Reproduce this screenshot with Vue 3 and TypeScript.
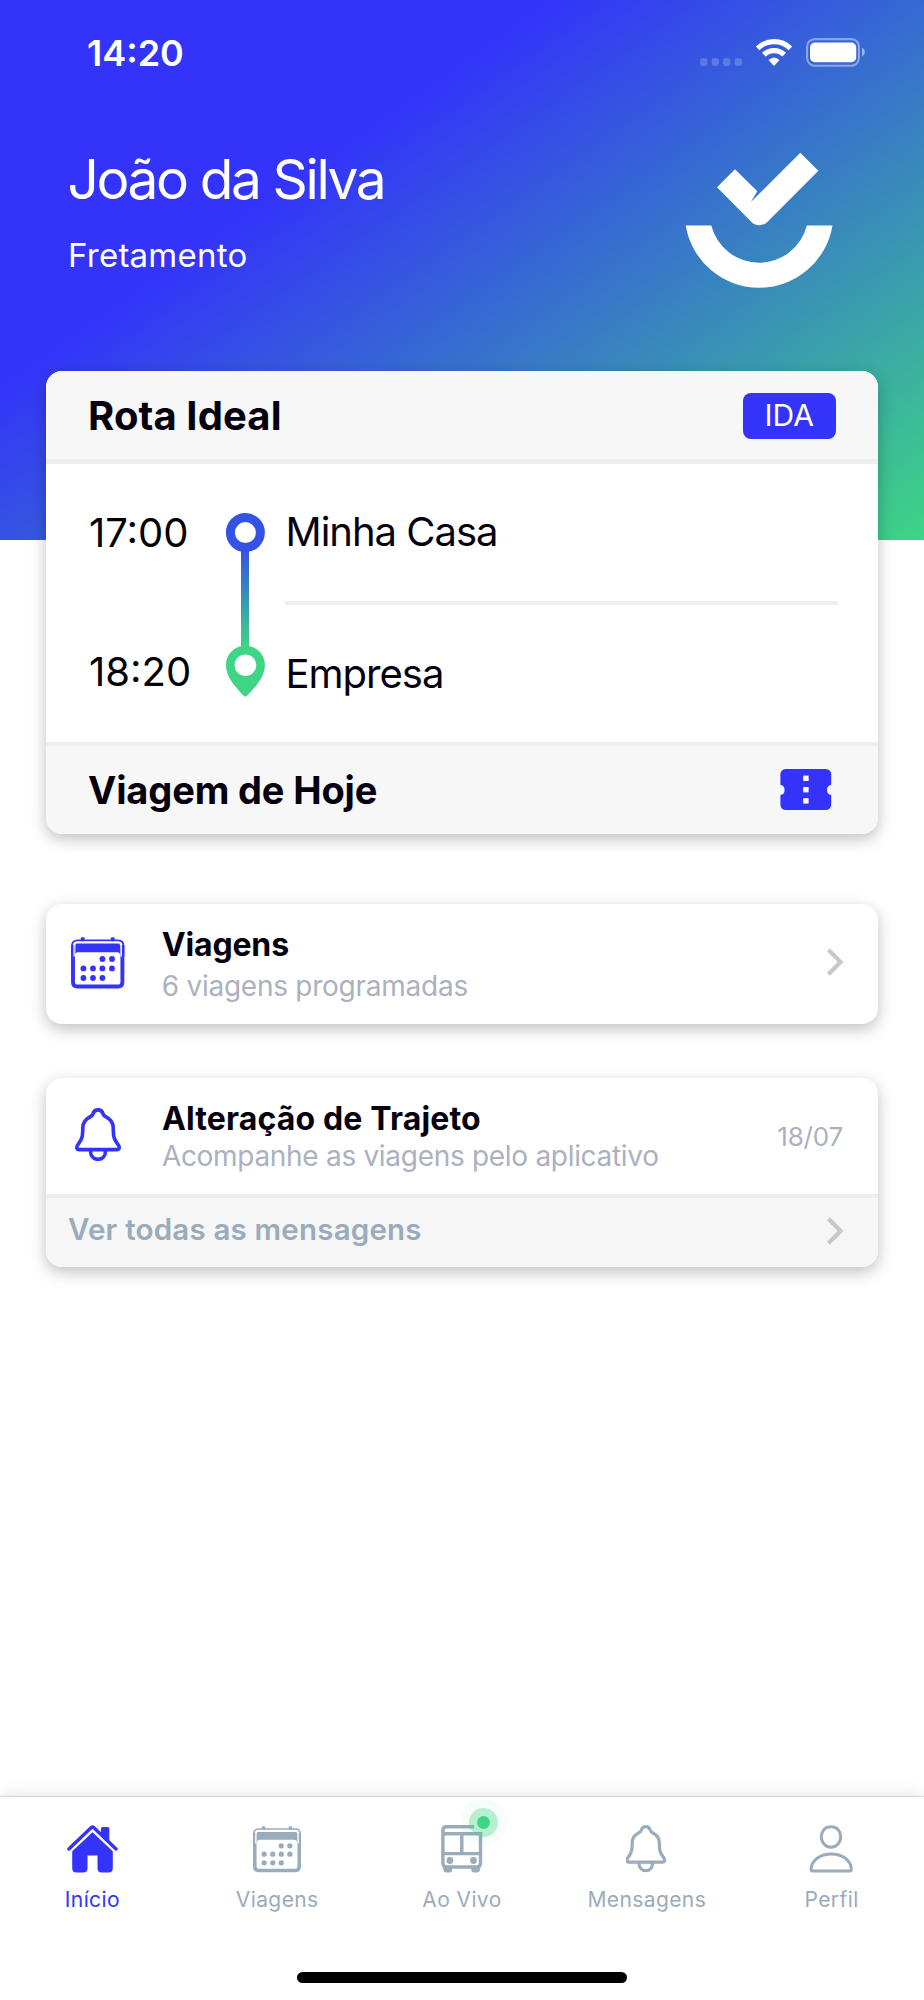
<script setup lang="ts">
interface Stop {
  time: string
  place: string
}

interface Tab {
  id: 'home' | 'calendar' | 'bus' | 'bell' | 'person'
  label: string
  active?: boolean
}

const stops: Stop[] = [
  { time: '17:00', place: 'Minha Casa' },
  { time: '18:20', place: 'Empresa' },
]

const tabs: Tab[] = [
  { id: 'home', label: 'Início', active: true },
  { id: 'calendar', label: 'Viagens' },
  { id: 'bus', label: 'Ao Vivo' },
  { id: 'bell', label: 'Mensagens' },
  { id: 'person', label: 'Perfil' },
]

const calendarDots: [number, number][] = [
  [31.4, 22], [41, 22],
  [12.4, 31.4], [22, 31.4], [31.4, 31.4], [41, 31.4],
  [12.4, 41], [22, 41], [31.4, 41],
]

const bellBody =
  'M23 1.9 C20.2 1.9 18.6 3.4 18 5.8 C17.6 7.4 16.6 8.1 15 8.9 C10.4 11.1 8 14.8 7.8 19.6 C7.7 22.4 7.8 25.4 7.2 28.4 C6.5 31.8 4.6 34.4 2.7 37 C1.1 39.3 1.7 41.6 4.2 41.6 H41.8 C44.3 41.6 44.9 39.3 43.3 37 C41.4 34.4 39.5 31.8 38.8 28.4 C38.2 25.4 38.3 22.4 38.2 19.6 C38 14.8 35.6 11.1 31 8.9 C29.4 8.1 28.4 7.4 28 5.8 C27.4 3.4 25.8 1.9 23 1.9 Z'
const bellClapper = 'M15.4 42.6 C15.4 48 18.8 51.3 23 51.3 C27.2 51.3 30.6 48 30.6 42.6'
</script>

<template>
  <div class="screen">
    <header class="hero">
      <div class="status">
        <span class="clock">14:20</span>
        <svg class="status-icons" viewBox="698 36 168 34">
          <g fill="#fff" fill-opacity="0.2">
            <rect x="700" y="58.3" width="7.4" height="7.6" rx="2.4" />
            <rect x="711.6" y="58.3" width="7.4" height="7.6" rx="2.4" />
            <rect x="723" y="58.3" width="7.4" height="7.6" rx="2.4" />
            <rect x="734.6" y="58.3" width="7.4" height="7.6" rx="2.4" />
          </g>
          <g fill="none" stroke="#fff" stroke-width="5.2">
            <path d="M757.6 48.4 A23.4 23.4 0 0 1 790.4 48.4" />
            <path d="M763.8 54.7 A14.6 14.6 0 0 1 784.2 54.7" />
          </g>
          <path d="M768.5 60 Q774 54.8 779.5 60 L775 65 Q774 66.2 773 65 Z" fill="#fff" />
          <rect x="807.1" y="39.1" width="51.8" height="26.6" rx="7.6" fill="none" stroke="#fff" stroke-opacity="0.42" stroke-width="2.1" />
          <rect x="810" y="42.5" width="46.2" height="19.7" rx="4.8" fill="#fff" />
          <path d="M862 47.8 C865.8 49.2 865.8 54.8 862 56.4 Z" fill="#fff" fill-opacity="0.5" />
        </svg>
      </div>
      <div class="intro">
        <div>
          <h1 class="name">João da Silva</h1>
          <p class="role">Fretamento</p>
        </div>
        <svg class="logo" viewBox="685 152 148 136" fill="#fff">
          <path d="M717 187.3 L735 169.3 L757.3 191.3 L750.7 202.3 L800.3 152.7 L818.4 170.7 L767.8 221.4 C763 226.4 755.2 226.4 751 221.4 Z" />
          <path d="M685.7 225.5 H711.3 A49.3 49.3 0 0 0 806.9 225.5 H832.5 A74.4 74.4 0 0 1 685.7 225.5 Z" />
        </svg>
      </div>
    </header>

    <main class="cards">
      <section class="card route">
        <div class="bar bar-top">
          <h2 class="title">Rota Ideal</h2>
          <span class="badge">IDA</span>
        </div>
        <div class="stops">
          <div class="times">
            <span v-for="s in stops" :key="s.time">{{ s.time }}</span>
          </div>
          <svg class="track" viewBox="225 512 41 186">
            <defs>
              <linearGradient id="track-line" x1="0" y1="552" x2="0" y2="646" gradientUnits="userSpaceOnUse">
                <stop offset="0" stop-color="#3453e4" />
                <stop offset="1" stop-color="#3ed585" />
              </linearGradient>
            </defs>
            <rect x="241" y="550" width="8" height="98" fill="url(#track-line)" />
            <circle cx="245.4" cy="532.6" r="15" fill="#fff" stroke="#3453e4" stroke-width="9" />
            <path d="M245.4 645.7 C256.2 645.7 264.9 654.4 264.9 665 C264.9 676 257 685.6 246.8 696 Q245.4 697.2 244 696 C233.8 685.6 225.9 676 225.9 665 C225.9 654.4 234.6 645.7 245.4 645.7 Z" fill="#3ed585" />
            <circle cx="245.4" cy="665.2" r="10.8" fill="#fff" />
          </svg>
          <div class="places">
            <span class="place">{{ stops[0].place }}</span>
            <span class="place">{{ stops[1].place }}</span>
          </div>
        </div>
        <div class="bar bar-bottom">
          <h2 class="title today">Viagem de Hoje</h2>
          <svg class="ticket" viewBox="780 769 52 41">
            <path
              d="M785.5 769 H826 A5.2 5.2 0 0 1 831.2 774.2 V784.8 A5.2 5.2 0 0 0 831.2 795 V804.8 A5.2 5.2 0 0 1 826 810 H785.5 A5.2 5.2 0 0 1 780.4 804.8 V795 A5.2 5.2 0 0 0 780.4 784.8 V774.2 A5.2 5.2 0 0 1 785.5 769 Z"
              fill="#3333fa" />
            <g fill="#fff">
              <rect x="803.2" y="775.6" width="5.4" height="5.4" />
              <rect x="803.2" y="787" width="5.4" height="5.4" />
              <rect x="803.2" y="798.2" width="5.4" height="5.4" />
            </g>
          </svg>
        </div>
      </section>

      <section class="card trips">
        <svg class="lead calendar" viewBox="0 0 53.4 51.6">
          <use href="#calendar-shape" />
        </svg>
        <div class="copy">
          <h3 class="heading trips-heading">Viagens</h3>
          <p class="sub trips-sub">6 viagens programadas</p>
        </div>
        <svg class="chevron" viewBox="0 0 18 28"><path d="M2.4 1.8 L14.6 14 L2.4 26.2" /></svg>
      </section>

      <section class="card messages">
        <div class="message">
          <svg class="lead bell" viewBox="0 0 46 53.4">
            <path :d="bellBody" />
            <path :d="bellClapper" />
          </svg>
          <div class="copy">
            <h3 class="heading message-heading">Alteração de Trajeto</h3>
            <p class="sub message-sub">Acompanhe as viagens pelo aplicativo</p>
          </div>
          <span class="date">18/07</span>
        </div>
        <div class="all">
          <span class="all-label">Ver todas as mensagens</span>
          <svg class="chevron" viewBox="0 0 18 28"><path d="M2.4 1.8 L14.6 14 L2.4 26.2" /></svg>
        </div>
      </section>
    </main>

    <nav class="tabs">
      <div class="tab-row">
        <div v-for="t in tabs" :key="t.id" class="tab" :class="{ active: t.active }">
          <div class="tab-icon">
            <svg v-if="t.id === 'home'" width="51" height="48" viewBox="66.5 1824.7 51 48">
              <path d="M100.4 1828.4 Q100.4 1826.6 102.2 1826.6 H107 Q108.8 1826.6 108.8 1828.4 V1842.5 L100.4 1834.5 Z" fill="currentColor" />
              <path d="M68.4 1848.6 L90.8 1827.2 Q92 1826.2 93.2 1827.2 L115.5 1848.6" fill="none" stroke="currentColor" stroke-width="3.4" stroke-linecap="round" />
              <path d="M92 1832 L112.3 1851 V1868 Q112.3 1872.2 108.2 1872.2 H101.2 Q97 1872.2 97 1868 V1855.2 H87 V1868 Q87 1872.2 82.8 1872.2 H75.8 Q71.7 1872.2 71.7 1868 V1851 Z" fill="currentColor" />
            </svg>
            <svg v-else-if="t.id === 'calendar'" width="48" height="46.4" viewBox="0 0 53.4 51.6">
              <g id="calendar-shape">
                <path d="M2 8 V45 Q2 49.5 6.4 49.5 H47 Q51.4 49.5 51.4 45 V8" fill="none" stroke="currentColor" stroke-width="3.9" />
                <path d="M0.9 19.5 V9 Q0.9 3.4 6.6 3.4 H46.8 Q52.5 3.4 52.5 9 V19.5" fill="none" stroke="currentColor" stroke-width="1.8" />
                <path d="M3.1 19.5 V9.4 Q3.1 5.4 6.6 5.4 H46.8 Q50.3 5.4 50.3 9.4 V19.5" fill="none" stroke="#fff" stroke-width="1.3" />
                <path d="M4.4 18 V8 Q4.4 6.6 6 6.6 H47.4 Q49 6.6 49 8 V18 Q49 15.2 46.4 15.2 H7 Q4.4 15.2 4.4 18 Z" fill="currentColor" />
                <rect x="9.8" y="0.2" width="3.8" height="4" rx="1" fill="currentColor" />
                <rect x="39.8" y="0.2" width="3.8" height="4" rx="1" fill="currentColor" />
                <circle v-for="([x, y], i) in calendarDots" :key="i" :cx="x" :cy="y" r="2.9" fill="currentColor" />
              </g>
            </svg>
            <template v-else-if="t.id === 'bus'">
              <svg width="42" height="48" viewBox="440.8 1824.7 42 48">
                <path d="M474 1826.5 H446 Q442.7 1826.5 442.7 1829.8 V1862.8 Q442.7 1866.7 446.4 1866.7 H476.6 Q480.3 1866.7 480.3 1862.8 V1833.4" fill="none" stroke="currentColor" stroke-width="3.4" />
                <path d="M443 1833.4 H482 M443 1853.3 H481 M461.6 1833 V1853" fill="none" stroke="currentColor" stroke-width="3.4" />
                <circle cx="449.7" cy="1860.2" r="3.4" fill="currentColor" />
                <circle cx="473.3" cy="1860.2" r="3.4" fill="currentColor" />
                <path d="M443 1866 H452 V1869 Q452 1872.3 449 1872.3 H446.6 Q443.4 1872.3 443.2 1869 Z M480 1866 H471 V1869 Q471 1872.3 474 1872.3 H476.4 Q479.6 1872.3 479.8 1869 Z" fill="currentColor" />
              </svg>
              <span class="live"></span>
            </template>
            <svg v-else-if="t.id === 'bell'" class="bell" width="41" height="47.6" viewBox="0.8 0 46 53.4">
              <path :d="bellBody" />
              <path :d="bellClapper" />
            </svg>
            <svg v-else width="44" height="48" viewBox="809.7 1824.7 44 48" fill="none" stroke="currentColor" stroke-width="3" overflow="visible">
              <path d="M830.7 1826.5 C837 1826.5 840.4 1831 840.4 1836.2 C840.4 1842 836.5 1847 830.7 1847 C824.9 1847 821 1842 821 1836.2 C821 1831 824.4 1826.5 830.7 1826.5 Z" />
              <path d="M812.9 1870.7 Q810.8 1870.7 810.8 1868.6 C811.3 1859.4 820.6 1853.6 830.9 1853.6 C841.2 1853.6 850.6 1859.4 851 1868.6 Q851 1870.7 849 1870.7 Z" />
            </svg>
          </div>
          <span class="tab-label">{{ t.label }}</span>
        </div>
      </div>
      <div class="home-indicator"></div>
    </nav>
  </div>
</template>

<style>
body {
  margin: 0;
  background: #fff;
}
</style>

<style scoped>
.screen {
  width: 924px;
  height: 2000px;
  display: flex;
  flex-direction: column;
  overflow: hidden;
  background: #fff;
  color: #05000f;
  font-family: Inter, 'Liberation Sans', sans-serif;
  white-space: nowrap;
}

h1, h2, h3, p {
  margin: 0;
}

svg {
  display: block;
  flex: none;
}

.hero {
  height: 540px;
  flex: none;
  box-sizing: border-box;
  padding: 33px 58px 0 68px;
  background: linear-gradient(145deg, #3333fa 32%, #3ed585 100%);
  color: #fff;
}

.status {
  height: 40px;
  display: flex;
  align-items: center;
  justify-content: space-between;
  padding-left: 19px;
}

.clock {
  font-size: 36px;
  font-weight: 600;
  line-height: 40px;
}

.status-icons {
  width: 168px;
  height: 34px;
}

.intro {
  display: flex;
  justify-content: space-between;
  padding: 76px 33px 0 0;
}

.name {
  margin-left: -0.5px;
  font-size: 55px;
  font-weight: 400;
  line-height: 60px;
  letter-spacing: -2.4px;
}

.role {
  margin-top: 26px;
  font-size: 33px;
  line-height: 41px;
  letter-spacing: 0.25px;
}

.logo {
  width: 148px;
  height: 136px;
  margin-top: 3px;
}

.cards {
  flex: 1;
  padding: 0 46px;
  margin-top: -168.6px;
}

.card {
  border-radius: 16px;
  background: #fff;
  overflow: hidden;
  box-shadow: 0 5px 16px rgba(0, 0, 0, 0.25);
}

.bar {
  box-sizing: border-box;
  display: flex;
  align-items: center;
  justify-content: space-between;
  padding-left: 42px;
  background: #f7f7f7;
}

.bar-top {
  height: 92.6px;
  padding-top: 1.2px;
  padding-right: 42px;
  border-bottom: 5px solid #eee;
}

.bar-bottom {
  height: 92px;
  padding-right: 46px;
  padding-bottom: 1px;
  border-top: 4px solid #eee;
}

.title {
  font-size: 40px;
  font-weight: 700;
  line-height: 50px;
  letter-spacing: 0.1px;
}

.title.today {
  font-size: 38px;
  letter-spacing: -0.15px;
}

.badge {
  width: 93.5px;
  height: 45.5px;
  border-radius: 8px;
  background: #3333fa;
  color: #fff;
  font-size: 30px;
  line-height: 45.5px;
  text-align: center;
}

.stops {
  height: 278px;
  box-sizing: border-box;
  display: flex;
  padding: 48px 40px 0 43px;
}

.times {
  width: 136px;
  display: flex;
  flex-direction: column;
  gap: 99.5px;
  padding-top: 0.5px;
  font-size: 40px;
  line-height: 40px;
  color: #000;
}

.track {
  width: 41px;
  height: 186px;
}

.places {
  flex: 1;
  margin-left: 19px;
}

.place {
  display: block;
  padding-left: 0.5px;
  font-size: 40px;
  line-height: 40px;
  letter-spacing: -1px;
}

.place + .place {
  margin-top: 49px;
  padding-top: 49px;
  border-top: 4px solid #eee;
}

.ticket {
  width: 52px;
  height: 41px;
}

.trips {
  height: 120.5px;
  margin-top: 69.5px;
  display: flex;
}

.lead {
  color: #3333fa;
}

.lead.calendar {
  width: 53.4px;
  height: 51.6px;
  margin: 33.5px 37px 0 25.3px;
}

.bell {
  fill: none;
  stroke: currentColor;
  stroke-width: 3.6px;
  stroke-linejoin: round;
}

.lead.bell {
  width: 46px;
  height: 53.4px;
  margin: 30px 41.1px 0 28.8px;
}

.copy {
  flex: 1;
}

.heading {
  font-size: 32px;
  font-weight: 700;
  line-height: 40px;
}

.sub {
  font-size: 28px;
  line-height: 36px;
  letter-spacing: -0.25px;
  color: #abb1bf;
}

.trips-heading {
  margin-top: 21.5px;
  letter-spacing: -0.15px;
}

.trips-sub {
  margin-top: 2.5px;
}

.message-heading {
  margin-top: 21.5px;
  letter-spacing: 0.15px;
}

.message-sub {
  margin-top: -1px;
  letter-spacing: -0.3px;
}

.chevron {
  width: 18px;
  height: 28px;
  fill: none;
  stroke: #c7c7cc;
  stroke-width: 4.2px;
}

.trips .chevron {
  margin: 44.8px 34.2px 0 0;
}

.messages {
  margin-top: 53.5px;
}

.message {
  height: 116.5px;
  display: flex;
}

.date {
  margin: 41px 35px 0 0;
  font-size: 26px;
  line-height: 36px;
  letter-spacing: -0.2px;
  color: #abb1bf;
}

.all {
  height: 73px;
  box-sizing: border-box;
  display: flex;
  align-items: center;
  justify-content: space-between;
  padding: 0 34.2px 3px 22px;
  border-top: 4px solid #eee;
  background: #f6f6f6;
}

.all-label {
  margin-bottom: 4px;
  font-size: 29.5px;
  font-weight: 600;
  line-height: 40px;
  letter-spacing: 0.2px;
  color: #9aabbb;
}

.tabs {
  height: 203px;
  flex: none;
  display: flex;
  flex-direction: column;
  align-items: center;
  background: #fff;
  box-shadow: 0 -1px 1px rgba(0, 0, 0, 0.1), 0 -2px 16px rgba(0, 0, 0, 0.1);
}

.tab-row {
  width: 100%;
  display: flex;
}

.tab {
  flex: 1;
  display: flex;
  flex-direction: column;
  align-items: center;
  color: #9aabbb;
}

.tab.active {
  color: #3333fa;
}

.tab-icon {
  position: relative;
  height: 48px;
  margin-top: 27.7px;
  display: flex;
  align-items: flex-end;
}

.live {
  position: absolute;
  left: 28px;
  top: -17px;
  width: 13.4px;
  height: 13.4px;
  margin: 8px;
  border-radius: 50%;
  background: #3ed585;
  box-shadow: 0 0 0 8px rgba(62, 213, 133, 0.35), 0 0 0 16px rgba(62, 213, 133, 0.04);
}

.tab-label {
  margin-top: 12.8px;
  font-size: 21px;
  line-height: 30px;
  letter-spacing: 0.4px;
}

.home-indicator {
  width: 330px;
  height: 11px;
  margin-top: 56.2px;
  border-radius: 6px;
  background: #000;
}
</style>
